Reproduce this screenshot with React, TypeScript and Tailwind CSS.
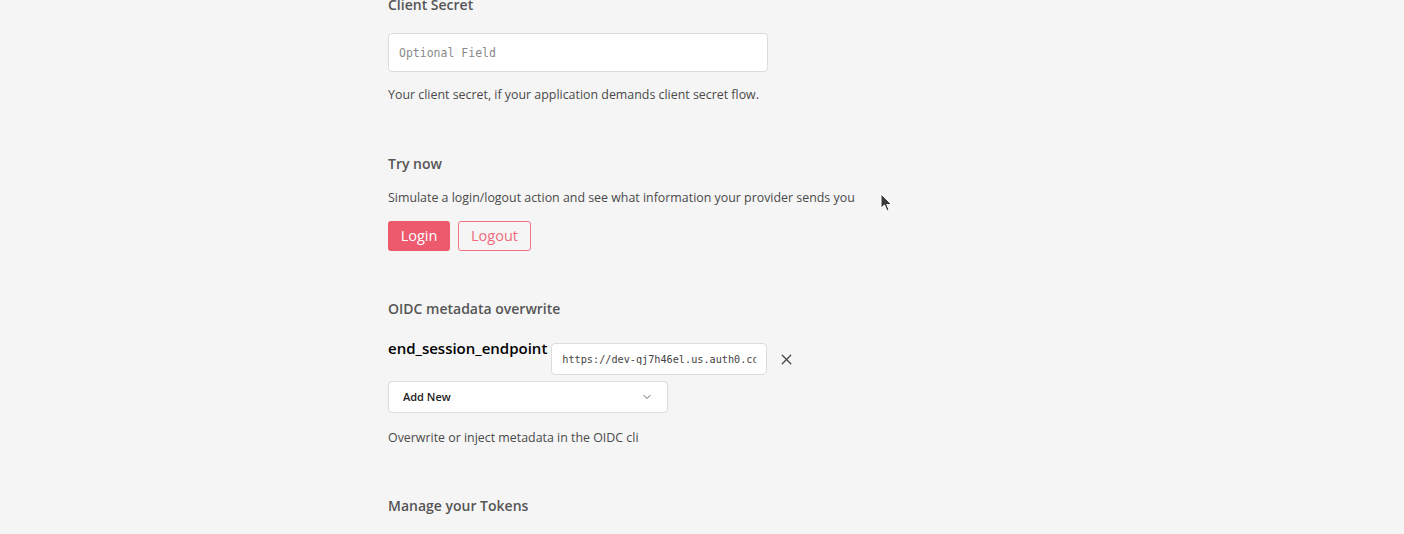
import React from 'react';
import { X, ChevronDown } from 'lucide-react';

const App: React.FC = () => {
  return (
    <div className="relative w-full h-[534px] overflow-hidden bg-[#f5f5f5] font-['Open_Sans',sans-serif]">
      <div className="ml-[388px] w-[480px] -mt-[5px]">
        {/* Client Secret */}
        <h3 className="text-[14px] leading-[20px] font-semibold text-[#555]">Client Secret</h3>
        <input
          className="mt-[18px] w-[380px] h-[39px] rounded-[4px] border border-[#dcdcdc] bg-white px-[10px] text-[11.5px] font-['DejaVu_Sans_Mono',monospace] placeholder:text-[#8a8a8a] outline-none"
          placeholder="Optional Field"
        />
        <p className="mt-[14px] text-[12.4px] leading-[18px] text-[#4a4a4a]">
          Your client secret, if your application demands client secret flow.
        </p>

        {/* Try now */}
        <h3 className="mt-[50px] text-[14px] leading-[20px] font-semibold text-[#555]">Try now</h3>
        <p className="mt-[15px] text-[12.4px] leading-[18px] text-[#4a4a4a] whitespace-nowrap">
          Simulate a login/logout action and see what information your provider sends you
        </p>
        <div className="mt-[14px] flex gap-[8px]">
          <button className="h-[30px] w-[62px] rounded-[3px] bg-[#ed5a6e] text-white text-[14.5px]">Login</button>
          <button className="h-[30px] w-[73px] rounded-[3px] border border-[#f17284] text-[#f06a7c] text-[14.5px]">Logout</button>
        </div>

        {/* OIDC metadata overwrite */}
        <h3 className="mt-[48px] text-[14px] leading-[20px] font-semibold text-[#555]">OIDC metadata overwrite</h3>
        <div className="mt-[24px] flex items-start">
          <span className="text-[15px] leading-[20px] font-semibold text-black mt-[-5px]">end_session_endpoint</span>
          <input
            className="ml-[4px] w-[216px] h-[32px] rounded-[4px] border border-[#dcdcdc] bg-white px-[10px] text-[10.2px] font-['DejaVu_Sans_Mono',monospace] text-[#444] outline-none"
            defaultValue="https://dev-qj7h46el.us.auth0.com/v2/logout"
          />
          <X className="ml-[11px] mt-[8px] w-[17px] h-[17px] text-[#444]" strokeWidth={1.8} />
        </div>
        <div className="mt-[6px] w-[280px] h-[32px] rounded-[4px] border border-[#dcdcdc] bg-white flex items-center justify-between pl-[14px] pr-[14px]">
          <span className="text-[11px] font-semibold text-[#222]">Add New</span>
          <ChevronDown className="w-[12px] h-[12px] text-[#666]" strokeWidth={2} />
        </div>
        <p className="mt-[16px] text-[12.4px] leading-[18px] text-[#4a4a4a]">Overwrite or inject metadata in the OIDC cli</p>

        {/* Manage your Tokens */}
        <h3 className="mt-[49px] text-[14px] leading-[20px] font-semibold text-[#555]">Manage your Tokens</h3>
      </div>

      {/* mouse pointer */}
      <svg className="absolute left-[880px] top-[193px]" width="14" height="20" viewBox="0 0 14 20">
        <path d="M1 1 L1 15 L4.5 12 L7 18 L9 17 L6.8 11.5 L11.5 11.5 Z" fill="#3a3a3a" stroke="#fff" strokeWidth="1" />
      </svg>
    </div>
  );
};

export default App;
